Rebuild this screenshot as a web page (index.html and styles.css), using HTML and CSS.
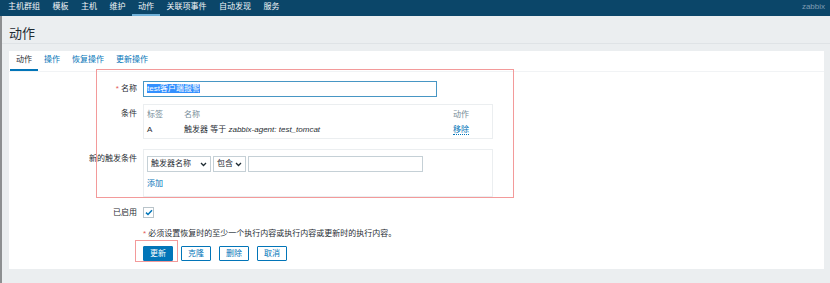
FILE: index.html
```html
<!DOCTYPE html>
<html>
  <head>
    <meta charset="utf-8">
    <title>动作</title>
    <link rel="stylesheet" href="styles.css">
  </head>
<body>
  <header class="topnav">
    <ul class="menu">
      <li>主机群组</li>
      <li>模板</li>
      <li>主机</li>
      <li>维护</li>
      <li class="active">动作</li>
      <li>关联项事件</li>
      <li>自动发现</li>
      <li>服务</li>
    </ul>
    <span class="brand">zabbix</span>
  </header>
  <main class="page">
    <div class="page-head">
      <h1>动作</h1>
    </div>
    <div class="panel">
      <ul class="tabs">
        <li class="active">动作</li>
        <li>操作</li>
        <li>恢复操作</li>
        <li>更新操作</li>
      </ul>

      <div class="form">
        <div class="row row-name">
          <label class="lbl"><span class="req">*</span> 名称</label>
          <div class="text-input name-input focused"><span class="selected">test客户端报警</span></div>
        </div>

        <div class="row row-cond">
          <label class="lbl">条件</label>
          <div class="box cond-box">
            <table class="cond-table">
              <tr class="thead"><td class="c1">标签</td><td class="c2">名称</td><td class="c3">动作</td></tr>
              <tr><td class="c1">A</td><td class="c2">触发器 等于 <i>zabbix-agent: test_tomcat</i></td><td class="c3"><a class="link dotted">移除</a></td></tr>
            </table>
          </div>
        </div>

        <div class="row row-new">
          <label class="lbl">新的触发条件</label>
          <div class="box new-box">
            <div class="controls">
              <div class="select sel-type">触发器名称<svg width="7" height="5" viewBox="0 0 7 5"><path d="M1 1 L3.5 3.5 L6 1" fill="none" stroke="#1f2c33" stroke-width="1.3"/></svg></div>
              <div class="select sel-op">包含<svg width="7" height="5" viewBox="0 0 7 5"><path d="M1 1 L3.5 3.5 L6 1" fill="none" stroke="#1f2c33" stroke-width="1.3"/></svg></div>
              <div class="text-input value-input"></div>
            </div>
            <a class="link add-link">添加</a>
          </div>
        </div>

        <div class="row row-enabled">
          <label class="lbl">已启用</label>
          <span class="checkbox"><svg width="8" height="7" viewBox="0 0 8 7"><path d="M1 3.6 L3 5.5 L7 1.2" fill="none" stroke="#0275b8" stroke-width="1.5"/></svg></span>
        </div>

        <div class="row row-note">
          <span class="lbl"></span>
          <span class="note"><span class="req">*</span> 必须设置恢复时的至少一个执行内容或执行内容或更新时的执行内容。</span>
        </div>

        <div class="row row-buttons">
          <span class="lbl"></span>
          <div class="buttons">
            <button class="btn primary">更新</button>
            <button class="btn">克隆</button>
            <button class="btn">删除</button>
            <button class="btn">取消</button>
          </div>
        </div>
      </div>

      <div class="mark mark-form"></div>
      <div class="mark mark-btn"></div>
    </div>
  </main>
</body>
</html>
```

FILE: styles.css
```css
html, body {
    margin: 0;
    padding: 0;
}
body {
    background: #ebeef0;
    font-family: "Liberation Sans", "Noto Sans CJK SC", sans-serif;
    font-size: 8px;
    color: #1f2c33;
    width: 830px;
    height: 283px;
    overflow: hidden;
}
ul {
    margin: 0;
    padding: 0;
    list-style: none;
}

/* top menu */
.topnav {
    height: 16px;
    background: #0b4669;
    display: flex;
    align-items: stretch;
}
.menu {
    display: flex;
    padding-left: 2px;
    flex: 1;
}
.menu li {
    padding: 0 6px;
    color: #f2f5f7;
    line-height: 14px;
    border-bottom: 2px solid transparent;
    margin-right: 0.5px;
}
.menu li.active {
    border-bottom-color: #6fb0d8;
}
.brand {
    color: #7f9db3;
    line-height: 14px;
    padding-right: 5px;
}

/* page */
.page {
    display: block;
    border-left: 2px solid #8d8f91;
    height: 267px;
}
.page-head {
    height: 27px;
    border-bottom: 1px solid #dfe3e6;
    padding-left: 7px;
    display: flex;
    align-items: center;
}
.page-head h1 {
    margin: 5px 0 0 0;
    font-size: 13px;
    font-weight: normal;
    color: #1f2c33;
}
.panel {
    position: relative;
    background: #fff;
    margin: 7px 6px 0 7px;
    height: 218px;
}

/* tabs */
.tabs {
    display: flex;
    height: 20px;
    padding-left: 1px;
    border-bottom: 1px solid #f1f3f5;
}
.tabs li {
    padding: 0 6px;
    line-height: 18px;
    color: #0275b8;
    border-bottom: 2px solid transparent;
}
.tabs li.active {
    color: #1f2c33;
    border-bottom-color: #0275b8;
}

/* form */
.form {
    display: flex;
    flex-direction: column;
}
.row {
    display: flex;
    align-items: flex-start;
}
.lbl {
    width: 128px;
    flex: none;
    text-align: right;
    padding-right: 6px;
    color: #1f2c33;
}
.req {
    color: #e45959;
}
.row-name { margin-top: 9px; }
.row-name .lbl { line-height: 15px; }
.row-cond { margin-top: 7px; }
.row-cond .lbl { padding-top: 4px; line-height: 11px; }
.row-new { margin-top: 10px; }
.row-new .lbl { padding-top: 4px; line-height: 11px; }
.row-enabled { margin-top: 10px; }
.row-enabled .lbl { line-height: 11px; }
.row-note { margin-top: 11px; }
.row-buttons { margin-top: 7px; }

.text-input {
    box-sizing: border-box;
    height: 16px;
    border: 1px solid #c5d0d6;
    background: #fff;
    padding-left: 3px;
    line-height: 14px;
}
.text-input.focused {
    border-color: #4796c4;
}
.name-input {
    width: 294px;
}
.selected {
    background: #3390ff;
    color: #fff;
}

.box {
    box-sizing: border-box;
    width: 350px;
    border: 1px solid #ebeef0;
}
.cond-box {
    height: 35px;
    padding: 2px 3px 0 3px;
}
.cond-table {
    border-collapse: collapse;
    width: 100%;
    font-size: 8px;
}
.cond-table td {
    padding: 0;
    height: 15px;
    line-height: 15px;
    white-space: nowrap;
}
.cond-table .thead td {
    color: #768d99;
}
.cond-table .c1 { width: 37px; }
.cond-table .c3 { width: 36px; }
.cond-table i {
    color: #1f2c33;
}

.link {
    color: #0275b8;
}
.link.dotted {
    border-bottom: 1px dotted #0275b8;
}

.new-box {
    height: 48px;
    padding: 6px 3px 0 3px;
}
.controls {
    display: flex;
    gap: 2px;
}
.select {
    box-sizing: border-box;
    height: 16px;
    border: 1px solid #c5d0d6;
    padding: 0 3px;
    line-height: 14px;
    display: flex;
    align-items: center;
    justify-content: space-between;
}
.sel-type { width: 64px; }
.sel-op { width: 33px; }
.value-input { width: 175px; }
.add-link {
    display: block;
    margin-top: 6px;
    line-height: 12px;
}

.checkbox {
    box-sizing: border-box;
    width: 11px;
    height: 11px;
    border: 1px solid #b9c4ca;
    display: flex;
    align-items: center;
    justify-content: center;
}

.note {
    line-height: 10px;
}

.buttons {
    display: flex;
    gap: 8px;
}
.btn {
    box-sizing: border-box;
    height: 15px;
    padding: 0 6px;
    border: 1px solid #0275b8;
    background: #fff;
    color: #0275b8;
    font-family: inherit;
    font-size: 8px;
    line-height: 13px;
    border-radius: 1px;
}
.btn.primary {
    background: #0275b8;
    color: #fff;
}

/* red annotation frames drawn over the form */
.mark {
    position: absolute;
    border: 1.5px solid #f39a9a;
    box-sizing: border-box;
    pointer-events: none;
}
.mark-form {
    left: 87px;
    top: 18px;
    width: 418px;
    height: 129px;
}
.mark-btn {
    left: 126px;
    top: 189px;
    width: 43px;
    height: 22px;
}
```
